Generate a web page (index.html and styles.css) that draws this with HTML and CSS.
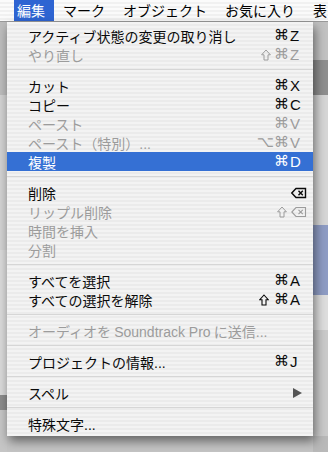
FILE: index.html
```html
<!DOCTYPE html>
<html lang="ja">
<head>
    <meta charset="UTF-8">
    <meta name="viewport" content="width=device-width, initial-scale=1.0">
    <title>編集メニュー</title>
    <link rel="stylesheet" href="styles.css">
</head>
<body>
    <!-- メニューバー -->
    <nav class="menubar">
        <span class="menubar-item active">編集</span>
        <span class="menubar-item">マーク</span>
        <span class="menubar-item">オブジェクト</span>
        <span class="menubar-item">お気に入り</span>
        <span class="menubar-item">表</span>
    </nav>

    <!-- 編集メニュー -->
    <div class="menu">
        <div class="row"><span>アクティブ状態の変更の取り消し</span><span class="keys"><span class="mods">⌘</span><span class="key">Z</span></span></div>
        <div class="row disabled"><span>やり直し</span><span class="keys"><svg class="shift" width="10" height="12" viewBox="0 0 10 12"><path d="M5 1 L9.4 5.8 H7 V11 H3 V5.8 H0.6 Z" fill="none" stroke="currentColor" stroke-width="1"/></svg><span class="mods">⌘</span><span class="key">Z</span></span></div>
        <div class="sep"></div>
        <div class="row"><span>カット</span><span class="keys"><span class="mods">⌘</span><span class="key">X</span></span></div>
        <div class="row"><span>コピー</span><span class="keys"><span class="mods">⌘</span><span class="key">C</span></span></div>
        <div class="row disabled"><span>ペースト</span><span class="keys"><span class="mods">⌘</span><span class="key">V</span></span></div>
        <div class="row disabled"><span>ペースト（特別）<span class="dots">...</span></span><span class="keys"><span class="mods">⌥⌘</span><span class="key">V</span></span></div>
        <div class="row selected"><span>複製</span><span class="keys"><span class="mods">⌘</span><span class="key">D</span></span></div>
        <div class="sep"></div>
        <div class="row"><span>削除</span><span class="keys"><span class="key"><svg class="del" width="16" height="12" viewBox="0 0 16 12"><path d="M5 1.5 H14.5 V10.5 H5 L0.8 6 Z" fill="none" stroke="currentColor" stroke-width="1.4"/><path d="M7.5 3.8 L11.8 8.2 M11.8 3.8 L7.5 8.2" stroke="currentColor" stroke-width="1.4"/></svg></span></span></div>
        <div class="row disabled"><span>リップル削除</span><span class="keys"><svg class="shift" width="10" height="12" viewBox="0 0 10 12"><path d="M5 1 L9.4 5.8 H7 V11 H3 V5.8 H0.6 Z" fill="none" stroke="currentColor" stroke-width="1"/></svg><span class="key"><svg class="del" width="16" height="12" viewBox="0 0 16 12"><path d="M5 1.5 H14.5 V10.5 H5 L0.8 6 Z" fill="none" stroke="currentColor" stroke-width="1.1"/><path d="M7.5 3.8 L11.8 8.2 M11.8 3.8 L7.5 8.2" stroke="currentColor" stroke-width="1.1"/></svg></span></span></div>
        <div class="row disabled"><span>時間を挿入</span></div>
        <div class="row disabled"><span>分割</span></div>
        <div class="sep"></div>
        <div class="row"><span>すべてを選択</span><span class="keys"><span class="mods">⌘</span><span class="key">A</span></span></div>
        <div class="row"><span>すべての選択を解除</span><span class="keys"><svg class="shift gap" width="10" height="12" viewBox="0 0 10 12"><path d="M5 1 L9.4 5.8 H7 V11 H3 V5.8 H0.6 Z" fill="none" stroke="currentColor" stroke-width="1.1"/></svg><span class="mods">⌘</span><span class="key">A</span></span></div>
        <div class="sep"></div>
        <div class="row disabled"><span>オーディオを <span class="latin">Soundtrack Pro</span> に送信<span class="dots">...</span></span></div>
        <div class="sep"></div>
        <div class="row"><span>プロジェクトの情報<span class="dots">...</span></span><span class="keys"><span class="mods">⌘</span><span class="key">J</span></span></div>
        <div class="sep"></div>
        <div class="row"><span>スペル</span><span class="arrow"></span></div>
        <div class="sep"></div>
        <div class="row"><span>特殊文字<span class="dots">...</span></span></div>
    </div>
</body>
</html>
```

FILE: styles.css
```css
body {
    margin: 0;
    width: 328px;
    height: 452px;
    overflow: hidden;
    position: relative;
    font-family: "Noto Sans CJK JP", sans-serif;
    background-color: #c4c4c4;
    background-image:
        linear-gradient(to bottom, #c2c2c2 0 60px, #8f8f8f 60px 95px, #d6d6d6 95px 225px, #8e9cc4 225px 295px, #dedede 295px 330px, #cacaca 330px 436px, #b9b9b9 436px),
        linear-gradient(to bottom, #bdbdbd 0 95px, #d2d2d2 95px 250px, #dadada 250px 395px, #8c8c8c 395px 410px, #c6c6c6 410px);
    background-size: 15px 100%, 7px 100%;
    background-position: right top, left top;
    background-repeat: no-repeat;
}

.menubar {
    height: 21px;
    display: flex;
    align-items: center;
    padding-left: 14px;
    background: repeating-linear-gradient(to bottom, #fbfbfb 0 2px, #f1f1f1 2px 4px);
    border-bottom: 1px solid #9a9a9a;
    font-size: 14px;
    color: #000;
    overflow: hidden;
}

.menubar-item {
    height: 21px;
    line-height: 21px;
    padding: 0 9px;
    white-space: nowrap;
    flex-shrink: 0;
}

.menubar-item.active {
    background-color: #2e64d2;
    color: white;
    padding: 0 9px 0 3px;
}

.menu {
    position: absolute;
    top: 22px;
    left: 7px;
    width: 306px;
    padding: 4px 0 3px;
    background: repeating-linear-gradient(to bottom, #f3f3f3 0 2px, #ebebeb 2px 4px);
    box-shadow: 2px 5px 10px rgba(0, 0, 0, 0.5);
    font-size: 14px;
    color: #0a0a0a;
}

.row {
    height: 19px;
    display: flex;
    align-items: center;
    justify-content: space-between;
    padding: 0 15px 0 21px;
    white-space: nowrap;
}

.row.disabled {
    color: #9c9c9c;
}

.row.selected {
    background-color: #3570d4;
    color: white;
}

.keys {
    display: flex;
    align-items: center;
    font-family: "DejaVu Sans", sans-serif;
}

.shift {
    display: block;
    flex-shrink: 0;
    margin-right: 3px;
}

.shift.gap {
    margin-right: 5px;
}

.mods {
    font-size: 15px;
    line-height: 19px;
    padding-right: 1px;
}

.key {
    width: 8px;
    display: flex;
    align-items: center;
    font-family: "Liberation Sans", sans-serif;
    font-size: 15px;
    line-height: 19px;
}

.del {
    display: block;
    flex-shrink: 0;
    margin-left: 1px;
}

.latin,
.dots {
    font-family: "Liberation Sans", sans-serif;
}

.sep {
    height: 1px;
    margin: 5px 0 6px;
    background-color: #d6d6d6;
}

.arrow {
    width: 0;
    height: 0;
    margin-right: -4px;
    border-top: 5px solid transparent;
    border-bottom: 5px solid transparent;
    border-left: 9px solid #555;
}
```
